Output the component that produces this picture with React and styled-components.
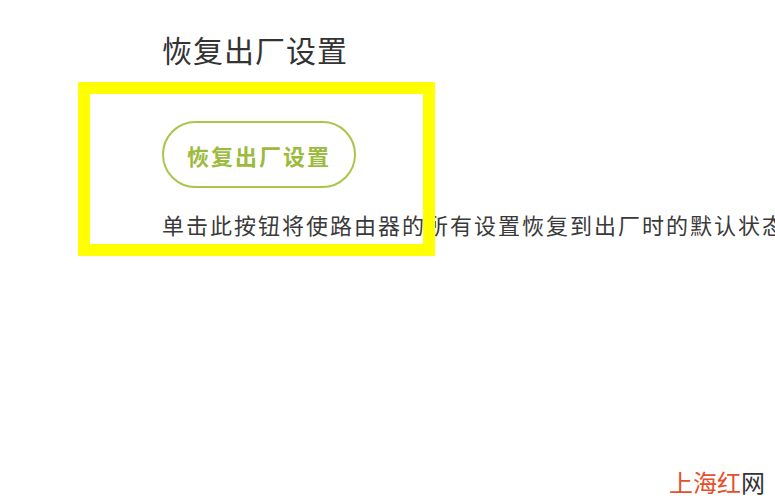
import React from "react";
import styled, { createGlobalStyle } from "styled-components";

const GlobalStyle = createGlobalStyle`
    html, body {
        margin: 0;
        padding: 0;
        background: #ffffff;
        overflow: hidden;
    }
    body {
        font-family: "Noto Sans CJK SC", "Noto Sans", sans-serif;
    }
`;

const Page = styled.div`
    position: relative;
    width: 775px;
    height: 502px;
    overflow: hidden;
    background: #ffffff;
`;

const Content = styled.div`
    display: flex;
    flex-direction: column;
    align-items: flex-start;
    padding: 31px 0 0 162px;
`;

const Title = styled.h2`
    margin: 0;
    font-size: 30px;
    line-height: 36px;
    font-weight: 400;
    letter-spacing: 1px;
    color: #333333;
`;

const ResetButton = styled.button`
    margin-top: 54px;
    width: 194px;
    height: 67px;
    border: 2px solid #a9c64b;
    border-radius: 34px;
    background: #ffffff;
    color: #9cbb3e;
    font-family: inherit;
    font-size: 22px;
    font-weight: 700;
    letter-spacing: 2px;
    cursor: pointer;
`;

const Description = styled.p`
    margin: 21px 0 0;
    font-size: 22px;
    line-height: 30px;
    letter-spacing: 2px;
    color: #3a3a3a;
    white-space: nowrap;
`;

// annotation frame drawn over the screenshot
const Highlight = styled.div`
    position: absolute;
    left: 78px;
    top: 82px;
    width: 357px;
    height: 174px;
    box-sizing: border-box;
    border: 12px solid #ffff00;
    pointer-events: none;
`;

const Watermark = styled.div`
    position: absolute;
    right: 10px;
    bottom: 6px;
    font-size: 24px;
    line-height: 28px;
    color: #e4502a;
    span {
        color: #333333;
    }
`;

const App = () => {
    return (
        <Page>
            <GlobalStyle />
            <Content>
                <Title>恢复出厂设置</Title>
                <ResetButton>恢复出厂设置</ResetButton>
                <Description>单击此按钮将使路由器的所有设置恢复到出厂时的默认状态</Description>
            </Content>
            <Highlight />
            <Watermark>
                上海红<span>网</span>
            </Watermark>
        </Page>
    );
};

export default App;
